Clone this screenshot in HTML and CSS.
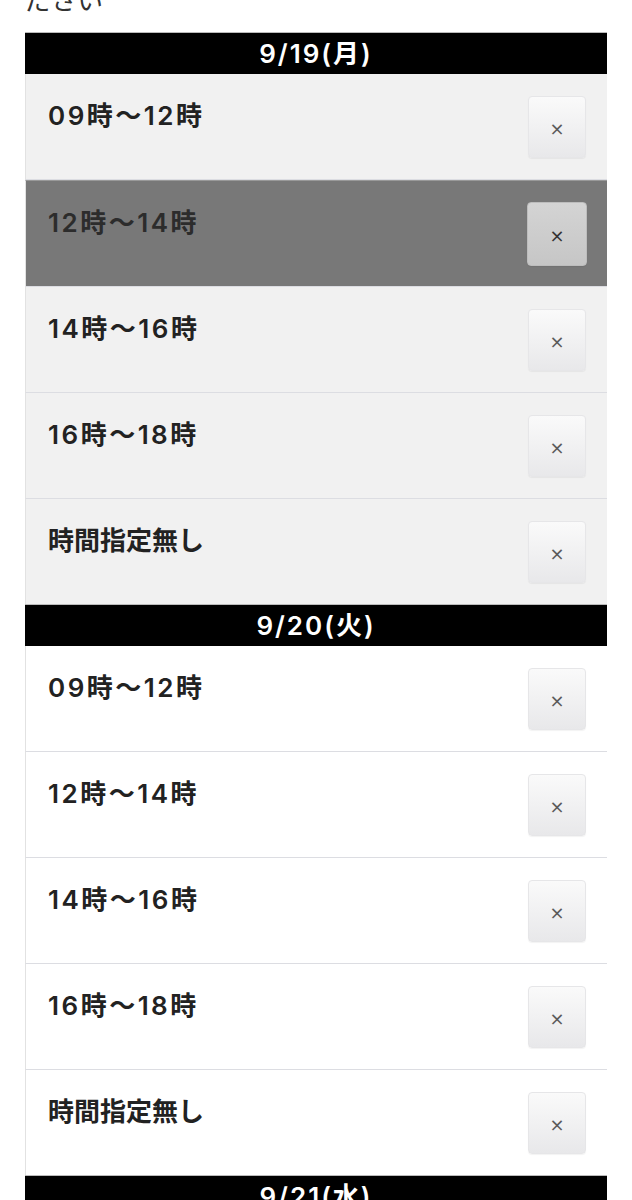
FILE: index.html
```html
<!DOCTYPE html>
<html lang="ja">
<head>
  <meta charset="UTF-8" />
  <meta name="viewport" content="width=device-width, initial-scale=1.0"/>
  <title>配達時間指定</title>
  <link rel="stylesheet" href="styles.css">
</head>
<body>
  <p class="lead">ださい</p>

  <div class="days">
    <div class="day day-past">
      <div class="day-head">9/19(月)</div>
      <div class="slot"><span class="slot-label">09時〜12時</span><button class="slot-btn">×</button></div>
      <div class="slot slot-active"><span class="slot-label">12時〜14時</span><button class="slot-btn">×</button></div>
      <div class="slot"><span class="slot-label">14時〜16時</span><button class="slot-btn">×</button></div>
      <div class="slot"><span class="slot-label">16時〜18時</span><button class="slot-btn">×</button></div>
      <div class="slot"><span class="slot-label slot-any">時間指定無し</span><button class="slot-btn">×</button></div>
    </div>

    <div class="day">
      <div class="day-head">9/20(火)</div>
      <div class="slot"><span class="slot-label">09時〜12時</span><button class="slot-btn">×</button></div>
      <div class="slot"><span class="slot-label">12時〜14時</span><button class="slot-btn">×</button></div>
      <div class="slot"><span class="slot-label">14時〜16時</span><button class="slot-btn">×</button></div>
      <div class="slot"><span class="slot-label">16時〜18時</span><button class="slot-btn">×</button></div>
      <div class="slot"><span class="slot-label slot-any">時間指定無し</span><button class="slot-btn">×</button></div>
    </div>

    <div class="day">
      <div class="day-head">9/21(水)</div>
      <div class="slot"><span class="slot-label">09時〜12時</span><button class="slot-btn">×</button></div>
      <div class="slot"><span class="slot-label">12時〜14時</span><button class="slot-btn">×</button></div>
    </div>
  </div>
</body>
</html>
```

FILE: styles.css
```css
body {
  margin: 0;
  padding: 0 25px;
  background-color: #fff;
  color: #222;
  font-family: "Noto Sans CJK JP", "Noto Sans", sans-serif;
}
.lead {
  margin: -16px 0 0;
  font-size: 26px;
  line-height: 30px;
  color: #333;
}
.days {
  margin-top: 18px;
}
.day-head {
  height: 41px;
  line-height: 41px;
  background-color: #000;
  color: #fff;
  text-align: center;
  font-family: Inter, "Noto Sans CJK JP", sans-serif;
  font-size: 26px;
  font-weight: 600;
  letter-spacing: 2px;
  border-top: 1px solid #bbb;
}
.slot {
  display: flex;
  justify-content: space-between;
  align-items: flex-start;
  height: 105px;
  padding: 0 21px 0 22px;
  background-color: #fff;
  border-left: 1px solid #e2e2e2;
  border-bottom: 1px solid #dcdde2;
}
.day-past .slot {
  background-color: #f1f1f1;
}
.slot:last-child {
  border-bottom: none;
}
.slot-label {
  padding-top: 27px;
  font-family: Inter, "Noto Sans CJK JP", sans-serif;
  font-size: 26px;
  line-height: 30px;
  font-weight: 600;
  letter-spacing: 2.5px;
  color: #222;
}
.slot-label.slot-any {
  letter-spacing: 0;
}
.slot-btn {
  width: 58px;
  height: 62px;
  margin-top: 22px;
  padding: 4px 0 0;
  border: 1px solid #e6e6e8;
  border-radius: 4px;
  background: linear-gradient(#fafafa, #e8e8ea);
  box-shadow: 0 1px 1px rgba(0, 0, 0, 0.05);
  color: #5a5a5a;
  font-family: "DejaVu Sans", sans-serif;
  font-size: 18px;
  line-height: 1;
  cursor: pointer;
}
.day-past .slot.slot-active {
  background-color: #787878;
  border-top: 1px solid #999;
}
.slot-active .slot-label {
  color: #2c2c2c;
}
.slot-active .slot-btn {
  width: 60px;
  height: 64px;
  margin-top: 21px;
  margin-right: -1px;
  border-color: #bdbdbd;
  background: linear-gradient(#d4d4d4, #c6c6c6);
  color: #333;
}
```
